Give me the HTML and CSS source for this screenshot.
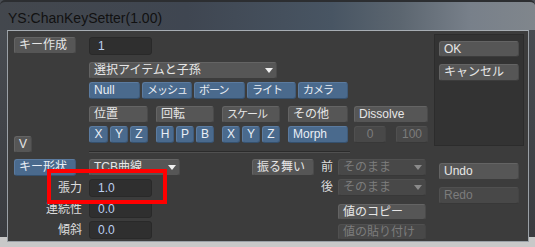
FILE: index.html
```html
<!DOCTYPE html>
<html lang="ja">

<head>
    <meta charset="UTF-8">
    <title>YS:ChanKeySetter(1.00)</title>
    <link rel="stylesheet" href="styles.css">
</head>

<body>
    <div class="window">
        <div class="titlebar">YS:ChanKeySetter(1.00)</div>

        <div class="frame">
            <div class="main">
                <!-- キー作成 -->
                <div class="row first">
                    <div class="lead"><div class="btn w62">キー作成</div></div>
                    <div class="field w63">1</div>
                </div>
                <div class="row gap7">
                    <div class="lead"></div>
                    <div class="btn drop w188">選択アイテムと子孫</div>
                </div>
                <div class="row gap3">
                    <div class="lead"></div>
                    <div class="group">
                        <div class="btn blue" style="width: 51px">Null</div>
                        <div class="btn blue tight" style="width: 50px">メッシュ</div>
                        <div class="btn blue tight" style="width: 51px">ボーン</div>
                        <div class="btn blue tight" style="width: 49px">ライト</div>
                        <div class="btn blue tight" style="width: 50px">カメラ</div>
                    </div>
                </div>
                <div class="row gap7">
                    <div class="lead"></div>
                    <div class="btn" style="width: 59px">位置</div>
                    <div class="btn ml8" style="width: 58px">回転</div>
                    <div class="btn ml8 tight" style="width: 58px">スケール</div>
                    <div class="btn ml8" style="width: 60px">その他</div>
                    <div class="btn ml6" style="width: 74px">Dissolve</div>
                </div>
                <div class="row gap3">
                    <div class="lead"><div class="btn center v">V</div></div>
                    <div class="group">
                        <div class="btn blue center" style="width: 19px">X</div>
                        <div class="btn blue center">Y</div>
                        <div class="btn blue center">Z</div>
                    </div>
                    <div class="group ml8">
                        <div class="btn blue center">H</div>
                        <div class="btn blue center">P</div>
                        <div class="btn blue center">B</div>
                    </div>
                    <div class="group ml8">
                        <div class="btn blue center">X</div>
                        <div class="btn blue center">Y</div>
                        <div class="btn blue center">Z</div>
                    </div>
                    <div class="btn blue ml8" style="width: 60px">Morph</div>
                    <div class="btn off center ml6" style="width: 32px">0</div>
                    <div class="btn off center ml10" style="width: 32px">100</div>
                </div>

                <div class="separator"></div>

                <!-- キー形状 -->
                <div class="bottom">
                    <div class="shape">
                        <div class="row">
                            <div class="lead"><div class="btn blue w62">キー形状</div></div>
                            <div class="btn drop" style="width: 91px">TCB曲線</div>
                        </div>
                        <div class="row gap3">
                            <div class="label">張力</div>
                            <div class="field w63">1.0</div>
                        </div>
                        <div class="row gap3">
                            <div class="label">連続性</div>
                            <div class="field w63">0.0</div>
                        </div>
                        <div class="row gap3">
                            <div class="label">傾斜</div>
                            <div class="field w63">0.0</div>
                        </div>
                        <div class="marker"></div>
                    </div>

                    <div class="behavior">
                        <div class="btn w62">振る舞い</div>
                        <div class="side-label">前</div>
                        <div class="btn drop off w88">そのまま</div>

                        <div class="side-label gap3">後</div>
                        <div class="btn drop off w88 gap3">そのまま</div>

                        <div class="btn w88 short copy">値のコピー</div>
                        <div class="btn off w88 short paste">値の貼り付け</div>
                    </div>
                </div>
            </div>

            <div class="side">
                <div class="panel">
                    <div class="btn w80 ok">OK</div>
                    <div class="btn w80 gap7">キャンセル</div>
                </div>
                <div class="btn w80 undo">Undo</div>
                <div class="btn off w80 gap7 redo">Redo</div>
            </div>
        </div>
    </div>
</body>

</html>
```

FILE: styles.css
```css
body {
    margin: 0;
    font-family: "Liberation Sans", "Noto Sans CJK JP", sans-serif;
    font-size: 12px;
    background-color: #c8c8c8;
}

.window {
    width: 535px;
    height: 247px;
    overflow: hidden;
    background: linear-gradient(180deg, #4a4e54 0%, #3a3c40 96%, #c8c8c8 96%);
}

.titlebar {
    height: 30px;
    box-sizing: border-box;
    padding: 4px 0 0 8px;
    line-height: 24px;
    font-size: 14px;
    color: #111;
    border-top: 2px solid #2c2e31;
    border-top-left-radius: 5px;
    border-top-right-radius: 5px;
    background: linear-gradient(90deg, #43474d 0%, #3f4651 35%, #485563 62%, #5c6670 75%, #78808a 88%, #80868c 100%);
}

.frame {
    display: flex;
    margin-left: 7px;
    width: 522px;
    height: 212px;
    box-sizing: border-box;
    border: 1px solid #9aa0a6;
    border-top-color: #a7adb3;
    background-color: #3c3c3c;
}

.main {
    flex: 1;
    padding-left: 6px;
}

.row {
    display: flex;
    align-items: flex-start;
}

.first {
    margin-top: 6px;
}

.gap3 {
    margin-top: 3px;
}

.gap7 {
    margin-top: 7px;
}

.ml6 {
    margin-left: 6px;
}

.ml8 {
    margin-left: 8px;
}

.ml10 {
    margin-left: 10px;
}

.lead {
    width: 62px;
    margin-right: 13px;
    flex-shrink: 0;
}

.group {
    display: flex;
    gap: 2px;
}

.btn {
    height: 17px;
    box-sizing: border-box;
    width: 18px;
    padding-left: 4px;
    line-height: 15px;
    white-space: nowrap;
    overflow: hidden;
    color: #e6e6e6;
    background-color: #565656;
    border: 1px solid #646464;
    border-bottom-color: #3c3c3c;
    border-right-color: #4a4a4a;
    border-radius: 3px;
    position: relative;
}

.blue {
    color: #e9eef5;
    background-color: #4a6a8d;
    border-color: #5b7ba0 #3f5b7a #35506d #5b7ba0;
}

.off {
    color: #7c7c7c;
    background-color: #484848;
    border-color: #505050 #444 #383838 #505050;
}

/* 幅の狭いボタンのカナ */
.tight {
    font-size: 11px;
    letter-spacing: -1px;
}

.center {
    padding-left: 0;
    text-align: center;
}

.w62 {
    width: 62px;
}

.w63 {
    width: 63px;
}

.w80 {
    width: 80px;
}

.w88 {
    width: 88px;
}

.w188 {
    width: 188px;
}

.drop::after {
    content: "";
    position: absolute;
    right: 3px;
    top: 5px;
    border-left: 4px solid transparent;
    border-right: 4px solid transparent;
    border-top: 5px solid #f0f0f0;
}

.off.drop::after {
    border-top-color: #8a8a8a;
}

.v {
    width: 18px;
    margin-top: 10px;
    margin-bottom: -10px;
}

.field {
    height: 18px;
    box-sizing: border-box;
    padding-left: 8px;
    line-height: 16px;
    color: #bccff2;
    background-color: #2f2f2f;
    border: 1px solid #292929;
    border-radius: 3px;
}

.separator {
    margin: 8px 0 6px 75px;
    width: 261px;
    border-top: 1px solid #2b2b2b;
    border-bottom: 1px solid #505050;
}

.bottom {
    display: flex;
}

.shape {
    width: 166px;
    position: relative;
}

.label {
    width: 68px;
    margin-right: 7px;
    text-align: right;
    line-height: 18px;
    color: #dcdcdc;
    flex-shrink: 0;
}

/* 赤い枠 (注目箇所) */
.marker {
    position: absolute;
    left: 33px;
    top: 10px;
    width: 120px;
    height: 35px;
    box-sizing: border-box;
    border: 4px solid #ff0000;
}

.behavior {
    margin-left: 72px;
    display: grid;
    grid-template-columns: 62px 24px 88px;
    align-items: start;
}

.side-label {
    text-align: center;
    line-height: 17px;
    padding-left: 2px;
    color: #dcdcdc;
}

.behavior .side-label.gap3 {
    grid-column: 2;
}

.short {
    height: 16px;
    line-height: 14px;
    grid-column: 3;
}

.copy {
    margin-top: 8px;
}

.paste {
    margin-top: 4px;
}

.side {
    width: 90px;
    margin-right: 4px;
    padding-top: 3px;
}

.panel {
    height: 112px;
    box-sizing: border-box;
    padding: 6px 0 0 4px;
    background-color: #333333;
    border: 1px solid #2c2c2c;
}

.ok {
    height: 16px;
    line-height: 14px;
}

.undo {
    margin: 17px 0 0 5px;
}

.redo {
    margin-left: 5px;
}
```
